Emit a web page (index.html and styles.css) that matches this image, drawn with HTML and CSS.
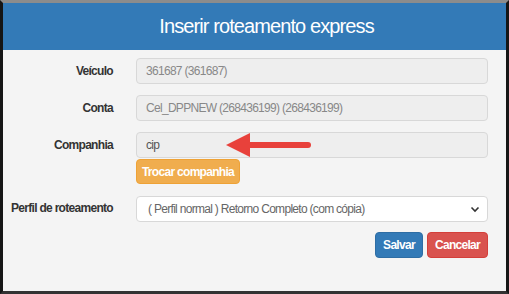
FILE: index.html
```html
<!DOCTYPE html>
<html>
<head>
    <title>Inserir roteamento express</title>
    <link rel="stylesheet" href="styles.css">
</head>
<body>
    <div class="modal">
        <div class="modal-header">
            <h1>Inserir roteamento express</h1>
        </div>

        <form class="modal-body">
            <label class="label">Veículo</label>
            <input class="field" type="text" value="361687 (361687)" disabled>

            <label class="label">Conta</label>
            <input class="field" type="text" value="Cel_DPPNEW (268436199) (268436199)" disabled>

            <label class="label">Companhia</label>
            <div class="field-group">
                <input class="field field-dark" type="text" value="cip" disabled>
                <svg class="arrow" width="90" height="26" viewBox="0 0 90 26">
                    <path d="M24 10 L82 10 A3 3 0 0 1 82 16 L24 16 Z" fill="#e8413b"/>
                    <path d="M0 13 L24 1 L24 25 Z" fill="#e8413b"/>
                </svg>
                <button type="button" class="btn btn-warning">Trocar companhia</button>
            </div>

            <label class="label">Perfil de roteamento</label>
            <div class="select-wrap">
                <select class="field field-select">
                    <option>( Perfil normal ) Retorno Completo (com cópia)</option>
                </select>
                <svg class="caret" width="10" height="7" viewBox="0 0 10 7">
                    <path d="M1.5 1.5 L5 5 L8.5 1.5" fill="none" stroke="#333" stroke-width="1.6"/>
                </svg>
            </div>

            <div class="actions">
                <button type="button" class="btn btn-primary">Salvar</button>
                <button type="button" class="btn btn-danger">Cancelar</button>
            </div>
        </form>
    </div>
</body>
</html>
```

FILE: styles.css
```css
body {
    margin: 0;
    font-family: "Liberation Sans", Arial, sans-serif;
    font-size: 12px;
    letter-spacing: -0.7px;
    color: #333;
}
.modal {
    width: 509px;
    height: 294px;
    box-sizing: border-box;
    border-top: 3px solid #8c8c8c;
    border-left: 3px solid #151515;
    border-right: 3px solid #151515;
    border-bottom: 3px solid #333;
    background-color: #f4f4f4;
}
.modal-header {
    height: 47px;
    background-color: #337ab7;
    display: flex;
    align-items: center;
    justify-content: center;
    padding-left: 24px;
}
.modal-header h1 {
    margin: 0;
    font-size: 20px;
    font-weight: normal;
    letter-spacing: -0.9px;
    color: #fff;
}
.modal-body {
    display: grid;
    grid-template-columns: 110px 352px;
    column-gap: 23px;
    row-gap: 11px;
    align-items: start;
    padding-top: 8px;
}
.label {
    font-weight: bold;
    text-align: right;
    line-height: 26px;
    white-space: nowrap;
}
.field {
    box-sizing: border-box;
    width: 352px;
    height: 26px;
    margin: 0;
    padding: 0 9px;
    font-family: inherit;
    font-size: 12px;
    letter-spacing: -0.7px;
    color: #888;
    background-color: #eee;
    border: 1px solid #d8d8d8;
    border-radius: 4px;
}
.field-dark {
    color: #555;
}
.field-group {
    position: relative;
    display: flex;
    flex-direction: column;
    align-items: flex-start;
    gap: 1px;
}
.arrow {
    position: absolute;
    left: 90px;
    top: 0px;
}
.select-wrap {
    position: relative;
    margin-top: 1px;
}
.field-select {
    appearance: none;
    -webkit-appearance: none;
    background-color: #fff;
    color: #666;
    padding-left: 11px;
}
.caret {
    position: absolute;
    right: 8px;
    top: 10px;
}
.actions {
    grid-column: 2;
    display: flex;
    justify-content: flex-end;
    gap: 4px;
    margin-top: -1px;
}
.btn {
    height: 26px;
    padding: 0;
    font-family: inherit;
    font-size: 12px;
    font-weight: bold;
    letter-spacing: -0.7px;
    color: #fff;
    white-space: nowrap;
    border: 1px solid transparent;
    border-radius: 4px;
}
.btn-warning {
    height: 25px;
    width: 104px;
    background-color: #f0ad4e;
    border-color: #eea236;
}
.btn-primary {
    width: 48px;
    background-color: #337ab7;
    border-color: #2e6da4;
}
.btn-danger {
    width: 61px;
    background-color: #d9534f;
    border-color: #d43f3a;
}
```
